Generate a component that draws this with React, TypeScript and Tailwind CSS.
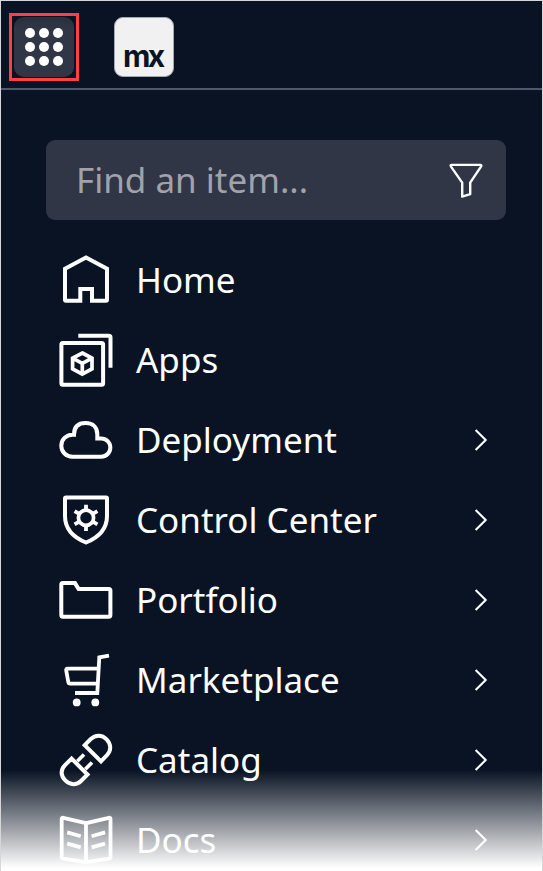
import type { ReactNode } from "react";

type Item = { label: string; icon: ReactNode; expandable?: boolean };

const items: Item[] = [
  {
    label: "Home",
    icon: <path d="M15 28.7 36 17.5 57 28.7V59.7Q57 60.7 56 60.7H42V49H30.3V60.7H16Q15 60.7 15 59.7Z" />,
  },
  {
    label: "Apps",
    icon: (
      <>
        <rect x="11.4" y="23" width="41.7" height="41.7" rx="1.5" />
        <path d="M28.3 15.7H58.8Q60.5 15.7 60.5 17.4V47.7" />
        <path d="M32.3 33 42 38.2V48.8L32.3 54.2 22.6 48.8V38.2ZM22.6 38.2 32.3 43.3 42 38.2M32.3 43.3V54" strokeWidth="3.7" />
      </>
    ),
  },
  {
    label: "Deployment",
    expandable: true,
    icon: (
      <path d="M24 34.7C24 27 28 23.1 35.6 23.1S47.3 27.5 47.3 34.5V38.4H51.2A9.1 9.1 0 0 1 51.2 56.7H22.3A11 11 0 0 1 22.3 34.7Z" />
    ),
  },
  {
    label: "Control Center",
    expandable: true,
    icon: (
      <>
        <path d="M16 17.5H56Q57 17.5 57 18.5V36C57 49 49 57.3 36 62.5C23 57.3 15 49 15 36V18.5Q15 17.5 16 17.5Z" />
        <circle cx="36" cy="37.8" r="7.6" strokeWidth="3.7" />
        <path d="M36 30V24.8M36 45.6V51M29.2 33.9 24.6 31.2M42.8 33.9 47.4 31.2M29.2 41.7 24.6 44.4M42.8 41.7 47.4 44.4" strokeWidth="3.8" />
      </>
    ),
  },
  {
    label: "Portfolio",
    expandable: true,
    icon: (
      <path d="M12.8 23.1H25L28.6 29H58.8Q60.4 29 60.4 30.6V55.1Q60.4 56.7 58.8 56.7H12.8Q11.3 56.7 11.3 55.1V24.7Q11.3 23.1 12.8 23.1Z" />
    ),
  },
  {
    label: "Marketplace",
    expandable: true,
    icon: (
      <>
        <path d="M59 15.7 49.3 17.3 47.3 53H25" strokeWidth="3.8" />
        <path d="M48.5 28.7H17.5Q15.9 28.7 16.2 30.3L18.3 42Q18.6 43.7 20.2 43.7H47.8" strokeWidth="3.8" />
        <g className="fill-white" stroke="none">
          <circle cx="26.7" cy="62.4" r="3.9" />
          <circle cx="45.3" cy="62.4" r="3.9" />
        </g>
      </>
    ),
  },
  {
    label: "Catalog",
    expandable: true,
    icon: (
      <>
        <path d="M34.7 25.2 40.8 19C45.5 14.5 52 14.7 56.6 19.3C61.2 24 61.5 30.5 57 35.2L51 41.3Z" />
        <path d="M21.6 38.6 15 45.2C10.3 49.9 10.5 56 15.5 60.6C20.2 65.2 26.5 65.4 31 61L37.5 54.5Z" />
        <path d="M34 34.5 27.3 41.2M42 42.5 35.3 49.2" strokeWidth="3.7" />
      </>
    ),
  },
  {
    label: "Docs",
    expandable: true,
    icon: (
      <>
        <path d="M36 23.2 13.2 17.8Q11.7 17.5 11.7 19V57.3Q11.7 58.4 13 58.7L36 62.2 59.2 58.7Q60.5 58.4 60.5 57.3V19Q60.5 17.5 59 17.8ZM36 23.2V62" strokeWidth="3.8" />
        <path d="M17.2 32.4 30.7 36.2M17.2 43.6 30.7 47.4M41.6 36.2 55.1 32.4M41.6 47.4 55.1 43.6" strokeWidth="3.7" />
      </>
    ),
  },
];

function Header() {
  return (
    <header className="flex h-[89px] shrink-0 items-start border-b-2 border-[#505968] pt-[12px] pl-[8px]">
      <button className="flex h-[68px] w-[70px] items-center justify-center border-3 border-[#ff4043]">
        <span className="grid h-[60px] w-[60px] grid-cols-[repeat(3,10px)] place-content-center gap-[4px] rounded-[10px] bg-gradient-to-b from-[#292f3d] via-[#303645] via-20% to-[#303645]">
          {Array.from({ length: 9 }, (_, i) => (
            <span key={i} className="h-[10px] w-[10px] rounded-full bg-white" />
          ))}
        </span>
      </button>
      <div className="mt-[4px] ml-[35px] flex h-[60px] w-[60px] items-end rounded-[9px] border border-[#a5a9b0] bg-[#f1f1f2] pb-[2px] pl-[8px]">
        <span className="font-['Inter',sans-serif] text-[30px] leading-[36px] font-bold tracking-[-2.6px] text-[#091323]">mx</span>
      </div>
    </header>
  );
}

function Row({ item }: { item: Item }) {
  return (
    <li className="flex h-20 shrink-0 items-center pr-[52px] pl-[49px]">
      <svg className="h-20 w-20 shrink-0" viewBox="0 0 80 80" fill="none" stroke="white" strokeWidth="4">
        {item.icon}
      </svg>
      <span className="ml-[6px] flex-1 text-[35px] leading-[48px] whitespace-nowrap text-white">{item.label}</span>
      {item.expandable && (
        <svg className="h-6 w-[17px]" viewBox="0 0 17 24" fill="none" stroke="white" strokeWidth="2.1">
          <path d="M2.6 2 12.7 12 2.6 22" />
        </svg>
      )}
    </li>
  );
}

export default function App() {
  return (
    <div className="relative flex h-[871px] w-[543px] flex-col overflow-hidden border-x border-t border-[#d5d7d9] bg-[#091323] font-['Noto_Sans',sans-serif]">
      <Header />
      <div className="mt-[50px] mr-[36px] ml-[45px] flex h-20 shrink-0 items-center rounded-[9px] bg-[#303645] pr-[22px] pl-[30px]">
        <span className="flex-1 text-[35px] leading-[48px] text-[#a1a2aa]">Find an item...</span>
        <svg className="h-[40px] w-[36px]" viewBox="0 0 36 40" fill="none" stroke="white" strokeWidth="2.4" strokeLinejoin="round">
          <path d="M3.8 4.9H32.2Q34 4.9 33 6.6L22.2 22.6V34.2L14.2 36.6V22.6L3 6.6Q2 4.9 3.8 4.9Z" />
        </svg>
      </div>
      <ul className="mt-[20px] flex flex-col">
        {items.map((item) => (
          <Row key={item.label} item={item} />
        ))}
      </ul>
      <div className="pointer-events-none absolute inset-x-0 bottom-0 h-[101px] bg-gradient-to-b from-white/0 to-white to-97%" />
    </div>
  );
}
